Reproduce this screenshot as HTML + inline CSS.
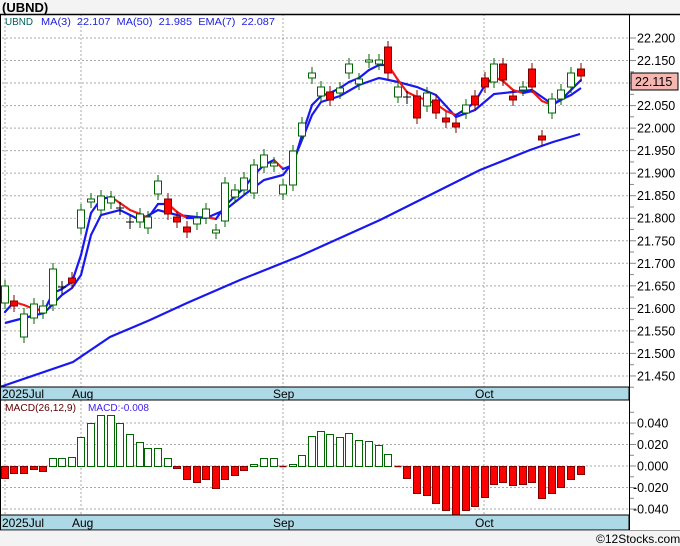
<!DOCTYPE html>
<html><head><meta charset="utf-8"><style>
html,body{margin:0;padding:0;background:#f3f3f3;}
svg{display:block;font-family:"Liberation Sans","DejaVu Sans",sans-serif;}
</style></head><body>
<svg id="s" width="680" height="546" xmlns="http://www.w3.org/2000/svg">
<rect x="0" y="0" width="680" height="546" fill="#f3f3f3"/>
<rect x="0" y="14" width="680" height="517" fill="#fff"/>
<text x="2" y="12" font-size="13" font-weight="bold" fill="#000">(UBND)</text>
<g id="g"></g>
</svg>
<script>
var g=document.getElementById('g'),h='';
function Y(p){return 38+(22.2-p)/0.05*22.53;}
for(var i=0;i<=15;i++){var p=22.2-i*0.05,y=Y(p);
h+='<line x1="2" y1="'+y+'" x2="629" y2="'+y+'" stroke="#aaa" stroke-dasharray="2,2"/>';
h+='<line x1="629" y1="'+y+'" x2="636" y2="'+y+'" stroke="#888"/>';
h+='<line x1="629" y1="'+(y+11.26)+'" x2="634" y2="'+(y+11.26)+'" stroke="#888"/>';
h+='<text x="637" y="'+(y+4.5)+'" font-size="12.5" fill="#000">'+p.toFixed(3)+'</text>';}
[5,81,283,484].forEach(function(x){h+='<line x1="'+x+'" y1="14" x2="'+x+'" y2="387" stroke="#aaa" stroke-dasharray="2,2"/><line x1="'+x+'" y1="400" x2="'+x+'" y2="515" stroke="#aaa" stroke-dasharray="2,2"/>';});
var m50=[[0,387],[73,362],[110,337],[150,320],[187,303],[240,280],[300,256],[380,220],[480,170],[530,150],[553,142],[580,134]];
function pl(a,c){return '<polyline fill="none" stroke="'+c+'" stroke-width="2.2" points="'+a.map(function(p){return p.join(',')}).join(' ')+'"/>';}
h+=pl(m50,'#1818f0');
var B=[[5,323],[24,318],[44,313],[62,295],[72,288],[81,275],[91,235],[101,215],[120,210],[140,220],[158,210],[177,215],[206,218],[225,210],[244,195],[264,180],[283,175],[293,162],[302,140],[312,115],[321,102],[340,96],[359,85],[379,78],[398,82],[417,87],[436,95],[456,117],[475,110],[494,94],[513,92],[532,90],[552,104],[571,95],[581,88]];
h+=pl(B,'#1818f0');
var A=[[5,312],[14,302],[24,305],[34,309],[44,311],[53,293],[62,289],[72,282],[81,255],[91,213],[101,199],[111,197],[120,203],[130,210],[140,214],[148,218],[158,204],[168,204],[177,212],[187,218],[197,218],[206,217],[216,219],[225,206],[235,196],[244,188],[254,175],[264,165],[274,160],[283,169],[293,165],[302,135],[312,105],[321,96],[330,93],[340,88],[349,82],[359,78],[369,70],[379,65],[388,65],[398,80],[407,92],[417,97],[427,100],[436,104],[446,111],[456,115],[466,109],[475,102],[485,85],[494,77],[503,81],[513,90],[523,93],[532,91],[542,101],[552,105],[561,100],[571,90],[581,80]];
for(var i=1;i<A.length;i++){var c=A[i][1]>A[i-1][1]?'#f01818':'#1818f0';h+='<line x1="'+A[i-1][0]+'" y1="'+A[i-1][1]+'" x2="'+A[i][0]+'" y2="'+A[i][1]+'" stroke="'+c+'" stroke-width="2.2" stroke-linecap="round"/>';}
var C=[[5,286,303,'g'],[14,301,306,'r'],[24,314,337,'g'],[34,304,318,'g'],[43,306,313,'g'],[53,269,305,'g'],[62,287,288,'k'],[72,278,283,'r'],[81,210,228,'g'],[91,199,202,'g'],[101,196,210,'g'],[111,197,203,'g'],[120,208,209,'k'],[130,222,223,'k'],[140,214,222,'g'],[148,217,228,'g'],[158,181,194,'g'],[168,199,214,'r'],[177,217,222,'r'],[187,227,232,'r'],[197,218,224,'g'],[206,209,218,'g'],[216,230,233,'g'],[225,183,221,'g'],[235,190,197,'g'],[244,178,190,'g'],[254,165,193,'g'],[264,155,167,'g'],[274,163,166,'g'],[283,185,194,'g'],[293,151,185,'g'],[302,123,136,'g'],[312,73,78,'g'],[321,87,96,'g'],[330,92,100,'r'],[340,88,93,'g'],[349,64,73,'g'],[359,79,84,'g'],[369,60,62,'g'],[379,60,64,'g'],[388,47,73,'r'],[398,87,97,'g'],[407,97,98,'k'],[417,96,118,'r'],[427,93,106,'g'],[436,100,113,'r'],[446,118,122,'r'],[456,123,127,'r'],[466,105,113,'g'],[475,96,105,'r'],[485,78,87,'r'],[494,64,82,'g'],[503,64,80,'r'],[513,96,100,'r'],[523,87,90,'g'],[532,69,87,'r'],[542,136,140,'r'],[552,99,113,'g'],[561,90,99,'g'],[571,73,87,'g'],[581,69,76,'r']];
C.forEach(function(c){var x=c[0],t=c[1],b=c[2],col=c[3]=='g'?'#006400':(c[3]=='r'?'#800000':'#000');
h+='<line x1="'+x+'" y1="'+(t-6)+'" x2="'+x+'" y2="'+(b+6)+'" stroke="'+col+'"/>';
if(c[3]=='k')h+='<line x1="'+(x-4)+'" y1="'+t+'" x2="'+(x+4)+'" y2="'+t+'" stroke="#000"/>';
else h+='<rect x="'+(x-3.5)+'" y="'+t+'" width="7" height="'+Math.max(b-t,2)+'" fill="'+(c[3]=='g'?'#fff':'#f00')+'" stroke="'+col+'"/>';});
[[423,'0.040'],[444.5,'0.020'],[466,'0.000'],[487.5,'-0.020'],[509,'-0.040']].forEach(function(a){var y=a[0];
h+='<line x1="2" y1="'+y+'" x2="629" y2="'+y+'" stroke="#aaa" stroke-dasharray="2,2"/><line x1="629" y1="'+y+'" x2="636" y2="'+y+'" stroke="#888"/><line x1="629" y1="'+(y-10.7)+'" x2="634" y2="'+(y-10.7)+'" stroke="#888"/>';
h+='<text x="'+(a[1][0]=='-'?633:637)+'" y="'+(y+4.5)+'" font-size="12.5" fill="#000">'+a[1]+'</text>';});
var M=[[5,-12],[14,-7],[24,-7],[34,-3],[43,-5],[53,8],[62,8],[72,9],[81,29],[91,43],[101,51],[111,51],[120,43],[130,32],[140,24],[148,18],[158,18],[168,8],[177,-2],[187,-13],[197,-16],[206,-13],[216,-22],[225,-13],[235,-9],[244,-4],[254,2],[264,8],[274,8],[283,-1],[293,2],[302,11],[312,30],[321,35],[330,32],[340,29],[349,33],[359,26],[369,25],[379,21],[388,12],[398,-1],[407,-12],[417,-27],[427,-29],[436,-37],[446,-44],[456,-49],[466,-44],[475,-40],[485,-31],[494,-18],[503,-16],[513,-19],[523,-18],[532,-16],[542,-32],[552,-27],[561,-21],[571,-13],[581,-8]];
M.forEach(function(m){var x=m[0],v=m[1],z=466.5;
if(Math.abs(v)<=1){h+='<line x1="'+(x-3.5)+'" y1="'+z+'" x2="'+(x+3.5)+'" y2="'+z+'" stroke="#800000" stroke-width="1.5"/>';return;}
if(v>0)h+='<rect x="'+(x-3.5)+'" y="'+(z-v)+'" width="7" height="'+v+'" fill="#fff" stroke="#006400"/>';
else h+='<rect x="'+(x-3.5)+'" y="'+z+'" width="7" height="'+(-v)+'" fill="#f00" stroke="#800000"/>';});
h+='<rect x="0" y="387" width="629" height="13" fill="#add8e6" stroke="#000"/>';
h+='<rect x="0" y="515" width="629" height="15" fill="#add8e6" stroke="#000"/>';
h+='<line x1="0" y1="14.5" x2="680" y2="14.5" stroke="#000" stroke-width="1.5"/>';
h+='<line x1="0.5" y1="14" x2="0.5" y2="531" stroke="#000"/>';
h+='<line x1="629.5" y1="14" x2="629.5" y2="531" stroke="#000"/>';
h+='<line x1="0" y1="530.5" x2="680" y2="530.5" stroke="#999"/>';
[[2,'2025Jul'],[72,'Aug'],[273,'Sep'],[475,'Oct']].forEach(function(d){
h+='<text x="'+d[0]+'" y="398" font-size="12" fill="#000">'+d[1]+'</text><text x="'+d[0]+'" y="527" font-size="12" fill="#000">'+d[1]+'</text>';});
h+='<rect x="631" y="73" width="47" height="17" fill="#f5b5b0" stroke="#000"/><text x="635" y="86" font-size="12.5" fill="#000">22.115</text>';
h+='<text x="5" y="25" font-size="10.5" fill="#006060" textLength="28" lengthAdjust="spacingAndGlyphs">UBND</text><text x="41" y="25" font-size="10.5" fill="#2020e0" xml:space="preserve" textLength="234" lengthAdjust="spacingAndGlyphs">MA(3)  22.107  MA(50)  21.985  EMA(7)  22.087</text>';
h+='<text x="5" y="411" font-size="10.5" fill="#600000" textLength="71" lengthAdjust="spacingAndGlyphs">MACD(26,12,9)</text><text x="88" y="411" font-size="10.5" fill="#4020f0" textLength="61" lengthAdjust="spacingAndGlyphs">MACD:-0.008</text>';
h+='<text x="596" y="543" font-size="12" fill="#000">©12Stocks.com</text>';
g.innerHTML=h;
</script>
</body></html>
